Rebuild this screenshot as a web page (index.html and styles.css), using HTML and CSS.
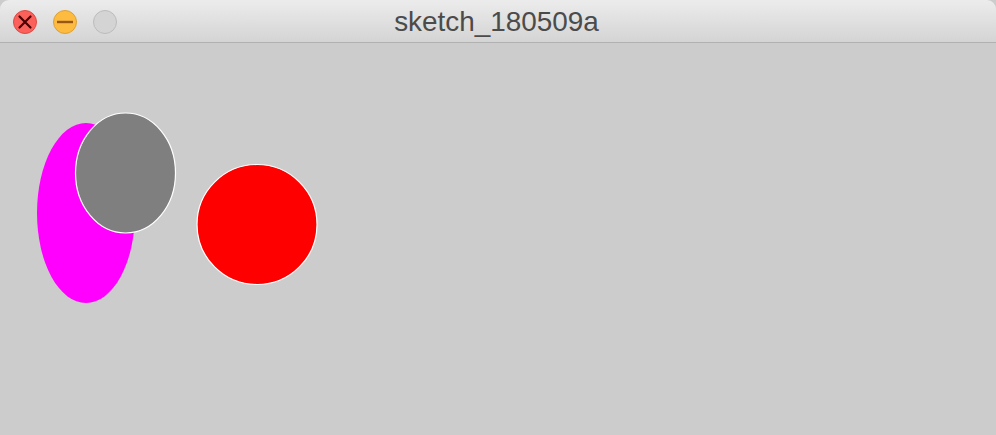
FILE: index.html
```html
<!DOCTYPE html>
<html>
<head>
<meta charset="utf-8">
<link rel="stylesheet" href="styles.css">
</head>
<body>
<div class="window">
  <div class="titlebar">
    <div class="lights">
      <span class="light close">
        <svg width="22" height="22" viewBox="0 0 22 22"><path d="M5.5 5.5 L16.5 16.5 M16.5 5.5 L5.5 16.5" stroke="#4a0002" stroke-width="2.2" stroke-linecap="round"/></svg>
      </span>
      <span class="light minimize">
        <svg width="22" height="22" viewBox="0 0 22 22"><path d="M3 11 H19" stroke="#985712" stroke-width="2.4"/></svg>
      </span>
      <span class="light zoom"></span>
    </div>
    <div class="title">sketch_180509a</div>
  </div>
  <div class="canvas">
    <svg width="996" height="392" viewBox="0 0 996 392">
      <ellipse cx="86" cy="170" rx="49" ry="90" fill="#ff00ff"/>
      <ellipse cx="125.5" cy="130" rx="50" ry="60" fill="#7f7f7f" stroke="#ffffff" stroke-width="1.2"/>
      <circle cx="257" cy="181.5" r="60" fill="#ff0000" stroke="#ffffff" stroke-width="1.2"/>
    </svg>
  </div>
</div>
</body>
</html>
```

FILE: styles.css
```css
html, body {
  margin: 0;
  padding: 0;
  background: #cccccc;
}
.window {
  width: 996px;
  height: 435px;
  display: flex;
  flex-direction: column;
  background: #cccccc;
  overflow: hidden;
}
.titlebar {
  height: 42px;
  flex: none;
  border-bottom: 1px solid #b1b1b1;
  background: linear-gradient(#ececec, #d4d4d4);
  border-radius: 9px 9px 0 0;
  display: flex;
  align-items: center;
  position: relative;
}
.lights {
  display: flex;
  gap: 16px;
  padding-left: 13px;
  padding-top: 1px;
}
.light {
  width: 24px;
  height: 24px;
  border-radius: 50%;
  display: flex;
  align-items: center;
  justify-content: center;
  box-sizing: border-box;
}
.light svg {
  display: block;
  flex: none;
}
.close {
  background: #fc605b;
  border: 1px solid #de4a44;
}
.minimize {
  background: #fdbc40;
  border: 1px solid #dea034;
}
.zoom {
  background: #d4d4d4;
  border: 1px solid #bcbcbc;
}
.title {
  position: absolute;
  left: 0;
  right: 0;
  top: 0;
  bottom: 0;
  display: flex;
  align-items: center;
  justify-content: center;
  font-family: "Liberation Sans", Arial, sans-serif;
  font-size: 27.9px;
  color: #4b4b4b;
  padding-right: 3px;
  padding-top: 1px;
}
.canvas {
  flex: 1;
  background: #cccccc;
}
.canvas svg {
  display: block;
}
```
